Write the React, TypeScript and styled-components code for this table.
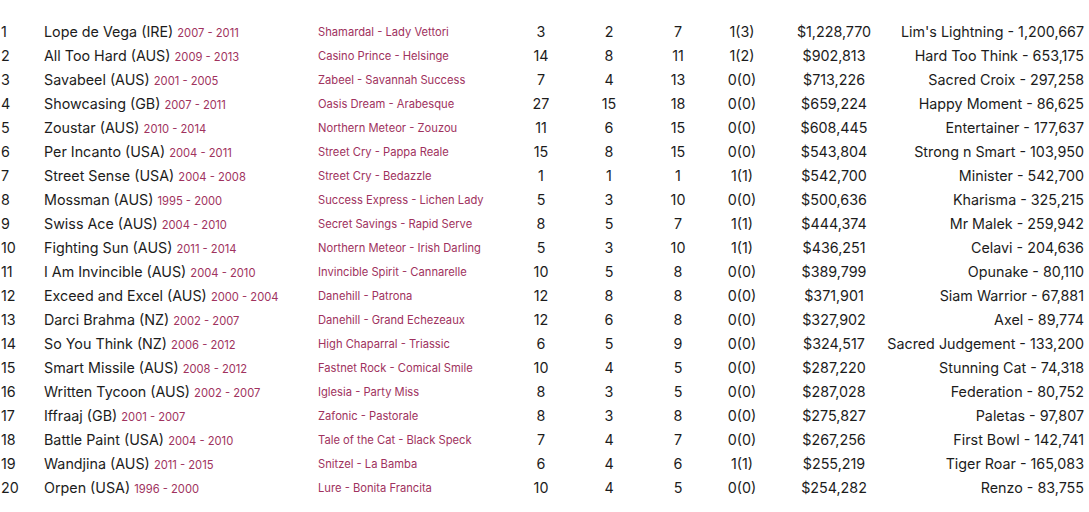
import React from 'react'
import styled, { createGlobalStyle } from 'styled-components'

const GlobalStyle = createGlobalStyle`
  html, body {
    margin: 0;
    padding: 0;
    background: #ffffff;
  }
  body {
    font-family: Inter, "Liberation Sans", sans-serif;
    color: #1c1c1c;
  }
`

type Sire = {
  name: string
  years: string
  parents: string
  runners: string
  winners: string
  wins: string
  stakes: string
  prize: string
  best: string
}

const rows: Sire[] = [
  { name: 'Lope de Vega (IRE)', years: '2007 - 2011', parents: 'Shamardal - Lady Vettori', runners: '3', winners: '2', wins: '7', stakes: '1(3)', prize: '$1,228,770', best: "Lim's Lightning - 1,200,667" },
  { name: 'All Too Hard (AUS)', years: '2009 - 2013', parents: 'Casino Prince - Helsinge', runners: '14', winners: '8', wins: '11', stakes: '1(2)', prize: '$902,813', best: 'Hard Too Think - 653,175' },
  { name: 'Savabeel (AUS)', years: '2001 - 2005', parents: 'Zabeel - Savannah Success', runners: '7', winners: '4', wins: '13', stakes: '0(0)', prize: '$713,226', best: 'Sacred Croix - 297,258' },
  { name: 'Showcasing (GB)', years: '2007 - 2011', parents: 'Oasis Dream - Arabesque', runners: '27', winners: '15', wins: '18', stakes: '0(0)', prize: '$659,224', best: 'Happy Moment - 86,625' },
  { name: 'Zoustar (AUS)', years: '2010 - 2014', parents: 'Northern Meteor - Zouzou', runners: '11', winners: '6', wins: '15', stakes: '0(0)', prize: '$608,445', best: 'Entertainer - 177,637' },
  { name: 'Per Incanto (USA)', years: '2004 - 2011', parents: 'Street Cry - Pappa Reale', runners: '15', winners: '8', wins: '15', stakes: '0(0)', prize: '$543,804', best: 'Strong n Smart - 103,950' },
  { name: 'Street Sense (USA)', years: '2004 - 2008', parents: 'Street Cry - Bedazzle', runners: '1', winners: '1', wins: '1', stakes: '1(1)', prize: '$542,700', best: 'Minister - 542,700' },
  { name: 'Mossman (AUS)', years: '1995 - 2000', parents: 'Success Express - Lichen Lady', runners: '5', winners: '3', wins: '10', stakes: '0(0)', prize: '$500,636', best: 'Kharisma - 325,215' },
  { name: 'Swiss Ace (AUS)', years: '2004 - 2010', parents: 'Secret Savings - Rapid Serve', runners: '8', winners: '5', wins: '7', stakes: '1(1)', prize: '$444,374', best: 'Mr Malek - 259,942' },
  { name: 'Fighting Sun (AUS)', years: '2011 - 2014', parents: 'Northern Meteor - Irish Darling', runners: '5', winners: '3', wins: '10', stakes: '1(1)', prize: '$436,251', best: 'Celavi - 204,636' },
  { name: 'I Am Invincible (AUS)', years: '2004 - 2010', parents: 'Invincible Spirit - Cannarelle', runners: '10', winners: '5', wins: '8', stakes: '0(0)', prize: '$389,799', best: 'Opunake - 80,110' },
  { name: 'Exceed and Excel (AUS)', years: '2000 - 2004', parents: 'Danehill - Patrona', runners: '12', winners: '8', wins: '8', stakes: '0(0)', prize: '$371,901', best: 'Siam Warrior - 67,881' },
  { name: 'Darci Brahma (NZ)', years: '2002 - 2007', parents: 'Danehill - Grand Echezeaux', runners: '12', winners: '6', wins: '8', stakes: '0(0)', prize: '$327,902', best: 'Axel - 89,774' },
  { name: 'So You Think (NZ)', years: '2006 - 2012', parents: 'High Chaparral - Triassic', runners: '6', winners: '5', wins: '9', stakes: '0(0)', prize: '$324,517', best: 'Sacred Judgement - 133,200' },
  { name: 'Smart Missile (AUS)', years: '2008 - 2012', parents: 'Fastnet Rock - Comical Smile', runners: '10', winners: '4', wins: '5', stakes: '0(0)', prize: '$287,220', best: 'Stunning Cat - 74,318' },
  { name: 'Written Tycoon (AUS)', years: '2002 - 2007', parents: 'Iglesia - Party Miss', runners: '8', winners: '3', wins: '5', stakes: '0(0)', prize: '$287,028', best: 'Federation - 80,752' },
  { name: 'Iffraaj (GB)', years: '2001 - 2007', parents: 'Zafonic - Pastorale', runners: '8', winners: '3', wins: '8', stakes: '0(0)', prize: '$275,827', best: 'Paletas - 97,807' },
  { name: 'Battle Paint (USA)', years: '2004 - 2010', parents: 'Tale of the Cat - Black Speck', runners: '7', winners: '4', wins: '7', stakes: '0(0)', prize: '$267,256', best: 'First Bowl - 142,741' },
  { name: 'Wandjina (AUS)', years: '2011 - 2015', parents: 'Snitzel - La Bamba', runners: '6', winners: '4', wins: '6', stakes: '1(1)', prize: '$255,219', best: 'Tiger Roar - 165,083' },
  { name: 'Orpen (USA)', years: '1996 - 2000', parents: 'Lure - Bonita Francita', runners: '10', winners: '4', wins: '5', stakes: '0(0)', prize: '$254,282', best: 'Renzo - 83,755' },
]

export default function App() {
  return (
    <>
      <GlobalStyle />
      <Table>
        {rows.map((r, i) => (
          <Row key={r.name}>
            <Rank>{i + 1}</Rank>
            <Name>
              {r.name} <Years>{r.years}</Years>
            </Name>
            <Parents>{r.parents}</Parents>
            <Num>{r.runners}</Num>
            <Num>{r.winners}</Num>
            <Num>{r.wins}</Num>
            <Num $padRight={24}>{r.stakes}</Num>
            <Num>{r.prize}</Num>
            <Best>{r.best}</Best>
          </Row>
        ))}
      </Table>
    </>
  )
}

const Table = styled.div`
  width: 1084px;
  padding: 20px 0 0 0;
  display: flex;
  flex-direction: column;
`

const Row = styled.div`
  display: grid;
  grid-template-columns: 44px 274px 190px 66px 70px 68px 84px 76px 212px;
  height: 24px;
  line-height: 24px;
  font-size: 14.3px;
  white-space: nowrap;
`

const Rank = styled.div`
  padding-left: 1px;
`

const Name = styled.div`
  color: #1c1c1c;
`

const Years = styled.span`
  color: #a0325e;
  font-size: 11.2px;
`

const Parents = styled.div`
  color: #a0325e;
  font-size: 11.2px;
`

const Num = styled.div<{ $padRight?: number }>`
  text-align: center;
  padding-right: ${(p) => p.$padRight ?? 0}px;
`

const Best = styled.div`
  text-align: right;
`
